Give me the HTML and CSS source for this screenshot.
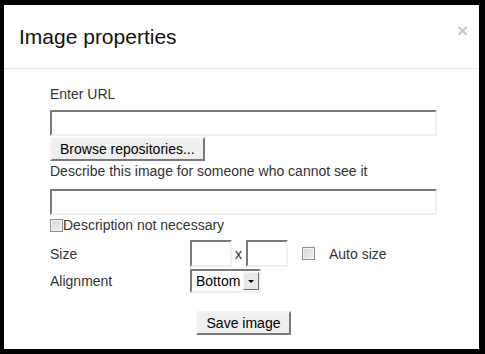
FILE: index.html
```html
<!DOCTYPE html>
<html lang="en">
<head>
    <meta charset="UTF-8">
    <meta name="viewport" content="width=device-width, initial-scale=1.0">
    <title>Image properties</title>
    <link rel="stylesheet" href="styles.css">
</head>
<body>
<div class="modal">
    <div class="modal-header">
        <h3>Image properties</h3>
        <button type="button" class="close">&times;</button>
    </div>

    <div class="modal-body">
        <form id="imageForm">
            <label class="field-label url-label" for="url">Enter URL</label>
            <input type="text" id="url" class="text-input">
            <button type="button" class="btn browse-btn">Browse repositories...</button>

            <label class="field-label alt-label" for="alt">Describe this image for someone who cannot see it</label>
            <input type="text" id="alt" class="text-input">
            <label class="check-row">
                <input type="checkbox" class="check">Description not necessary
            </label>

            <div class="prop-row size-row">
                <span class="prop-label">Size</span>
                <input type="text" class="text-input small">
                <span class="times">x</span>
                <input type="text" class="text-input small">
                <input type="checkbox" id="autosize" class="check auto-check">
                <label for="autosize">Auto size</label>
            </div>

            <div class="prop-row align-row">
                <span class="prop-label">Alignment</span>
                <span class="select-wrap">
                    <select class="select">
                        <option>Bottom</option>
                        <option>Middle</option>
                        <option>Top</option>
                    </select>
                </span>
            </div>

            <div class="actions">
                <button type="submit" class="btn save-btn">Save image</button>
            </div>
        </form>
    </div>
</div>
</body>
</html>
```

FILE: styles.css
```css
body {
    margin: 0;
    padding: 0;
    background-color: #000;
    font-family: "Liberation Sans", Arial, sans-serif;
    font-size: 14px;
    color: #333;
}

/* Dialog */
.modal {
    width: 475px;
    height: 344px;
    margin: 5px 0 0 4px;
    background-color: #fff;
}

.modal-header {
    display: flex;
    justify-content: space-between;
    align-items: flex-start;
    height: 64px;
    padding: 17px 11px 0 15px;
    border-bottom: 1px solid #e5e5e5;
    box-sizing: border-box;
}

.modal-header h3 {
    margin: 0;
    font-size: 21px;
    font-weight: normal;
    line-height: 30px;
    color: #111;
}

.close {
    margin-top: -1px;
    padding: 0;
    border: none;
    background: none;
    font-family: "Liberation Sans", Arial, sans-serif;
    font-size: 19px;
    font-weight: bold;
    line-height: 20px;
    color: #c8c8c8;
    cursor: pointer;
}

.modal-body {
    padding: 17px 42px 0 46px;
}

/* Form parts */
.field-label {
    display: block;
    line-height: 16px;
}

.url-label {
    margin-bottom: 8px;
}

.alt-label {
    margin-top: 2px;
    margin-bottom: 10px;
}

.text-input {
    display: block;
    width: 100%;
    height: 26px;
    margin: 0;
    padding: 0 3px;
    box-sizing: border-box;
    border: 2px solid;
    border-color: #7a7a7a #f0f0f0 #f0f0f0 #7a7a7a;
    background: #fff;
    font-family: inherit;
    font-size: 14px;
    outline: none;
}

.text-input.small {
    width: 42px;
    height: 27px;
}

.btn {
    display: inline-block;
    height: 24px;
    margin: 0;
    padding: 0 8px;
    box-sizing: border-box;
    border: 2px solid;
    border-color: #f4f4f4 #7a7a7a #7a7a7a #f4f4f4;
    background-color: #efefef;
    font-family: inherit;
    font-size: 14px;
    line-height: 18px;
    color: #000;
    cursor: pointer;
}

.browse-btn {
    margin-top: 1px;
    display: block;
}

.check {
    appearance: none;
    -webkit-appearance: none;
    width: 13px;
    height: 13px;
    margin: 0;
    box-sizing: border-box;
    border: 1px solid #8e8e8e;
    background: linear-gradient(135deg, #d4d4d4, #f2f2f2);
    box-shadow: inset 0 0 0 1px #f4f4f4;
    flex-shrink: 0;
}

.check-row {
    display: flex;
    align-items: center;
    margin-top: 2px;
    line-height: 16px;
}

.prop-row {
    display: flex;
    align-items: center;
}

.size-row {
    margin-top: 7px;
}

.align-row {
    margin-top: 2px;
}

.prop-label {
    width: 140px;
    flex-shrink: 0;
}

.times {
    margin: 0 4px 0 3px;
}

.auto-check {
    margin: 0 14px;
}

/* Dropdown */
.select-wrap {
    position: relative;
    display: inline-block;
}

.select {
    appearance: none;
    -webkit-appearance: none;
    width: 71px;
    height: 24px;
    margin: 0;
    padding: 0 0 0 4px;
    box-sizing: border-box;
    border: 2px solid;
    border-color: #7a7a7a #f0f0f0 #f0f0f0 #7a7a7a;
    background: #fff;
    font-family: inherit;
    font-size: 14px;
    color: #000;
    outline: none;
}

/* arrow button drawn over the select */
.select-wrap::before {
    content: "";
    position: absolute;
    top: 3px;
    right: 2px;
    width: 16px;
    height: 18px;
    box-sizing: border-box;
    border: 1px solid;
    border-color: #f4f4f4 #6a6a6a #6a6a6a #f4f4f4;
    background-color: #e8e8e8;
    pointer-events: none;
}

.select-wrap::after {
    content: "";
    position: absolute;
    top: 11px;
    right: 7px;
    border-top: 3px solid #000;
    border-left: 3px solid transparent;
    border-right: 3px solid transparent;
    pointer-events: none;
}

.actions {
    margin-top: 18px;
    text-align: center;
}

.save-btn {
    height: 24px;
    padding: 0 9px;
}
```
